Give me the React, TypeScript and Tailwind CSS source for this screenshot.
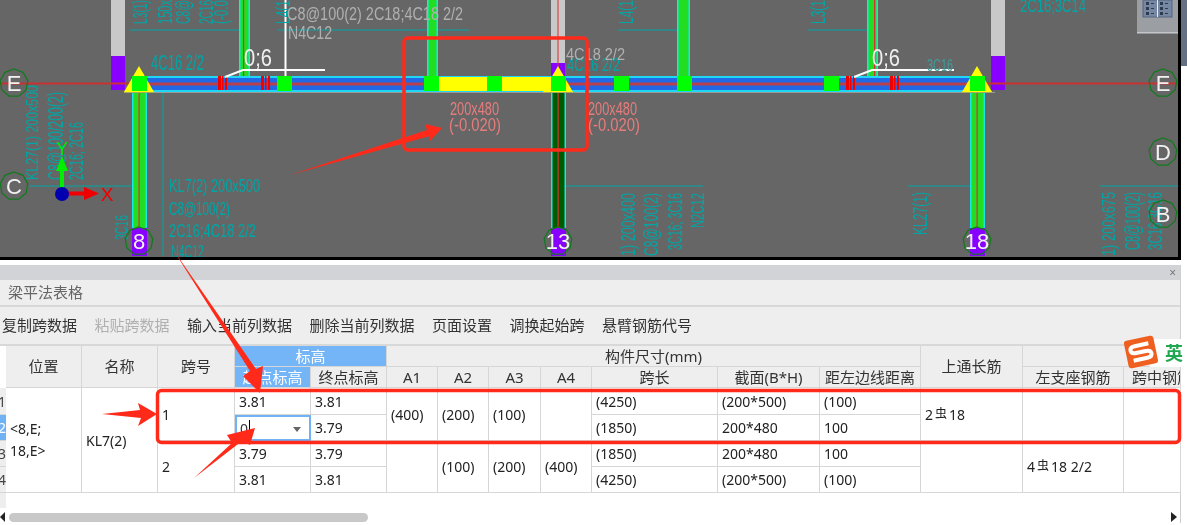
import React from "react";

const TEAL = "#00a6a6";
const PINK = "#e87c7c";
const GREY = "#b0b0b0";

// 图纸上的文字，CAD 字体偏窄，用 textLength 压缩
const T = ({ x, y, len, text, size = 18, color = TEAL }: { x: number; y: number; len: number; text: string; size?: number; color?: string }) => (
  <text x={x} y={y} fontSize={size} fill={color} textLength={len} lengthAdjust="spacingAndGlyphs" fontFamily="Liberation Sans, sans-serif">
    {text}
  </text>
);

const V = ({ x, y, len, text, size = 20, color = TEAL }: { x: number; y: number; len: number; text: string; size?: number; color?: string }) => (
  <text x={x} y={y} transform={`rotate(-90 ${x} ${y})`} fontSize={size} fill={color} textLength={len} lengthAdjust="spacingAndGlyphs" fontFamily="Liberation Sans, sans-serif">
    {text}
  </text>
);

const Axis = ({ cx, cy, label, r = 14 }: { cx: number; cy: number; label: string; r?: number }) => {
  const pts = Array.from({ length: 9 }, (_, i) => {
    const a = (i / 9) * Math.PI * 2 - Math.PI / 2;
    return `${cx + r * Math.cos(a)},${cy + r * Math.sin(a)}`;
  }).join(" ");
  return (
    <g>
      <polygon points={pts} fill="none" stroke="#127a1e" strokeWidth="1.3" />
      <text x={cx} y={cy + 8} textAnchor="middle" fontSize="22" fill="#f2f2f2" fontFamily="Liberation Sans, sans-serif">
        {label}
      </text>
    </g>
  );
};

const VBeam = ({ x, w, y, h, fill = "#22dd22", red }: { x: number; w: number; y: number; h: number; fill?: string; red?: number }) => (
  <g>
    <rect x={x} y={y} width={w} height={h} fill="#19e6e6" />
    <rect x={x + 1.5} y={y} width={w - 3} height={h} fill={fill} />
    {red !== undefined && <rect x={red} y={y} width="1.2" height={h} fill="#d83030" />}
  </g>
);

const Node = ({ x }: { x: number }) => <rect x={x} y="76" width="15" height="15" fill="#00ff00" />;

const Ticks = ({ x }: { x: number }) => (
  <g fill="#f00000">
    <rect x={x} y="76" width="3" height="14" />
    <rect x={x + 4} y="76" width="1.5" height="14" />
    <rect x={x + 7} y="76" width="2" height="14" />
  </g>
);

const Column = ({ x }: { x: number }) => (
  <g>
    <rect x={x} y="0" width="14" height="56" fill="#c9c9c9" />
    <rect x={x} y="56" width="14" height="34" fill="#8800ff" />
  </g>
);

const Tri = ({ x }: { x: number }) => (
  <g>
    <rect x={x - 15} y="91" width="30" height="2" fill="#a8a860" />
    <polygon points={`${x},66 ${x + 15},92 ${x - 15},92`} fill="#ffff00" />
    <rect x={x - 7} y="76" width="15" height="15" fill="#00ff00" />
  </g>
);

const Drawing = () => (
  <svg viewBox="0 0 1178 257" className="block w-[1178px] h-[257px]">
    <rect width="1178" height="257" fill="#666666" />

    <g stroke={TEAL} strokeWidth="1">
      <line x1="130" y1="30" x2="243" y2="30" />
      <line x1="278" y1="30" x2="470" y2="30" />
      <line x1="618" y1="30" x2="683" y2="30" />
      <line x1="808" y1="30" x2="870" y2="30" />
      <line x1="163" y1="84" x2="163" y2="256" />
      <line x1="30" y1="186" x2="140" y2="186" />
      <line x1="558" y1="186" x2="703" y2="186" />
      <line x1="908" y1="186" x2="977" y2="186" />
      <line x1="1100" y1="186" x2="1178" y2="186" />
    </g>

    <Column x={111} />
    <Column x={991} />
    <rect x="551" y="0" width="14" height="63" fill="#c9c9c9" />
    <rect x="551" y="63" width="14" height="14" fill="#8800ff" />
    <rect x="557.5" y="0" width="1" height="76" fill="#d83030" />

    <VBeam x={239} w={11} y={0} h={76} red={243} />
    <VBeam x={427} w={11} y={0} h={76} />
    <VBeam x={677} w={13} y={0} h={76} />
    <VBeam x={867} w={11} y={0} h={76} red={874} />

    <VBeam x={132} w={15} y={92} h={164} red={138.5} />
    <VBeam x={551} w={15} y={92} h={164} fill="#005a00" red={557.5} />
    <VBeam x={970} w={15} y={92} h={164} red={976.5} />
    <rect x="132" y="228" width="15" height="28" fill="#8800ff" />
    <rect x="551" y="228" width="15" height="28" fill="#8800ff" />
    <rect x="970" y="228" width="15" height="28" fill="#8800ff" />

    <rect x="0" y="82.5" width="146" height="2" fill="#c83232" />
    <rect x="985" y="82.5" width="193" height="2" fill="#c83232" />

    {/* 主梁 */}
    <rect x="125" y="92" width="870" height="1" fill="#9a9a9a" />
    <rect x="146" y="76" width="826" height="16" fill="#1fd6f5" />
    <rect x="146" y="78" width="826" height="12" fill="#2068e6" />
    <rect x="146" y="82.5" width="826" height="3" fill="#b8404e" />

    <rect x="439" y="77" width="48" height="14" fill="#ffff00" />
    <rect x="502" y="77" width="49" height="14" fill="#ffff00" />
    <Node x={277} />
    <Node x={424} />
    <Node x={487} />
    <Node x={614} />
    <Node x={677} />
    <Node x={824} />
    <Ticks x={218} />
    <Ticks x={261} />
    <Ticks x={846} />
    <Ticks x={890} />

    <Tri x={139} />
    <Tri x={558} />
    <Tri x={977} />

    {/* 白色引线 */}
    <g stroke="#ffffff" strokeWidth="2" fill="none">
      <polyline points="225,77 243,70 325,70" />
      <polyline points="854,77 872,70 954,70" />
      <line x1="285.5" y1="0" x2="285.5" y2="76" />
    </g>
    <T x={244} y={66} len={28} text="0;6" size={23} color="#f0f0f0" />
    <T x={872} y={66} len={28} text="0;6" size={23} color="#f0f0f0" />

    <T x={151} y={70} len={53} text="4C16 2/2" size={22} />
    <T x={169} y={192} len={91} text="KL7(2) 200x500" />
    <T x={169} y={215} len={61} text="C8@100(2)" />
    <T x={169} y={237} len={87} text="2C16;4C18 2/2" />
    <T x={171} y={258} len={33} text="N4C12" />
    <V x={38} y={180} len={95} text="KL27(1) 200x500" size={17} />
    <V x={63} y={180} len={88} text="C8@100/200(2)" size={22} />
    <V x={83} y={180} len={58} text="2C16; 2C16" size={20} />
    <V x={128} y={240} len={25} text="3C16" size={18} />

    <V x={147} y={24} len={24} text="L3(1)" />
    <V x={172} y={24} len={24} text="150x" />
    <V x={190} y={24} len={24} text="C8@" />
    <V x={213} y={24} len={24} text="2C16" />
    <V x={228} y={24} len={24} text="(-0.0" />
    <V x={290} y={24} len={24} text="L4(1" />
    <T x={287} y={20} len={176} text="C8@100(2) 2C18;4C18 2/2" color={GREY} />
    <T x={288} y={39} len={44} text="N4C12" color={GREY} />

    <T x={567} y={71} len={53} text="4C16 2/2" size={19} />
    <T x={566} y={60} len={59} text="4C18 2/2" size={17} color={GREY} />
    <T x={450} y={115} len={49} text="200x480" color={PINK} />
    <T x={449} y={131} len={52} text="(-0.020)" color={PINK} />
    <T x={588} y={115} len={49} text="200x480" color={PINK} />
    <T x={588} y={131} len={52} text="(-0.020)" color={PINK} />

    <V x={635} y={256} len={63} text="1) 200x400" />
    <V x={658} y={256} len={63} text="C8@100(2)" />
    <V x={682} y={250} len={57} text="3C16; 3C16" />
    <V x={704} y={228} len={35} text="N2C12" size={19} />
    <V x={633} y={24} len={24} text="L4(1" />
    <V x={825} y={24} len={24} text="L3(1" />
    <T x={1020} y={12} len={66} text="2C16;3C14" />
    <T x={927} y={71} len={26} text="3C16" size={17} color="#3f9c9c" />
    <V x={927} y={235} len={43} text="KL27(1)" />
    <V x={1115} y={256} len={64} text="1) 200x675" size={18} />
    <V x={1140} y={250} len={58} text="C8@100(2)" size={22} />
    <V x={1162} y={250} len={58} text="3C16;3C16" />

    <Axis cx={14} cy={83} label="E" />
    <Axis cx={14} cy={186} label="C" />
    <Axis cx={139} cy={241} label="8" />
    <Axis cx={558} cy={241} label="13" />
    <Axis cx={977} cy={241} label="18" />
    <Axis cx={1163} cy={83} label="E" />
    <Axis cx={1163} cy={152} label="D" />
    <Axis cx={1163} cy={214} label="B" />

    {/* 坐标轴 */}
    <rect x="60" y="168" width="4" height="20" fill="#00ee00" />
    <polygon points="62,156 68,171 56,171" fill="#00ee00" />
    <rect x="68" y="191.5" width="18" height="4" fill="#f00000" />
    <polygon points="99,193.5 84,187 84,200" fill="#f00000" />
    <circle cx="62" cy="194" r="7" fill="#0000b0" />
    <text x="62" y="155" textAnchor="middle" fontSize="18" fill="#00ee00" fontFamily="Liberation Sans, sans-serif">Y</text>
    <text x="107" y="201" textAnchor="middle" fontSize="19" fill="#f00000" fontFamily="Liberation Sans, sans-serif">X</text>

    {/* 右上角视图按钮 */}
    <rect x="1137" y="0" width="41" height="33" fill="#9b9fa3" />
    <rect x="1137" y="32" width="41" height="1.5" fill="#c4c7ca" />
    <rect x="1143" y="0" width="29" height="17" fill="#7587a2" stroke="#55657e" />
    <line x1="1157.5" y1="0" x2="1157.5" y2="17" stroke="#e8ecf2" />
    <g fill="#2f3a4c">
      <rect x="1146" y="2" width="3" height="3" />
      <rect x="1146" y="7" width="3" height="3" />
      <rect x="1146" y="12" width="3" height="3" />
      <rect x="1160" y="2" width="3" height="3" />
      <rect x="1160" y="7" width="3" height="3" />
      <rect x="1160" y="12" width="3" height="3" />
      <rect x="1151" y="3" width="3" height="1" />
      <rect x="1151" y="8" width="3" height="1" />
      <rect x="1151" y="13" width="3" height="1" />
      <rect x="1165" y="3" width="3" height="1" />
      <rect x="1165" y="8" width="3" height="1" />
      <rect x="1165" y="13" width="3" height="1" />
    </g>
  </svg>
);

const line = "border-r border-b border-[#d6d6d6]";
const head = `${line} bg-[#eeeeee] flex items-center justify-center text-[15px] text-[#333]`;
const cell = `${line} bg-white flex items-center pl-[4px] text-[14px] text-[#222]`;

const Rebar = ({ n, rest }: { n: string; rest: string }) => (
  <>
    {n}
    <span className="text-[12px] relative -top-[2px] mx-[2px]">虫</span>
    {rest}
  </>
);

const RowNo = ({ n, row, active }: { n: string; row: string; active?: boolean }) => (
  <div className={`${row} col-start-1 border-b border-[#d6d6d6] flex items-center justify-end overflow-hidden text-[14px] ${active ? "bg-[#6fb2f6] text-white" : "bg-[#eeeeee] text-[#444]"}`}>
    <span className="shrink-0">{n}</span>
  </div>
);

const BeamTable = () => (
  <div className="grid grid-cols-[6px_76px_76px_77px_76px_76px_51px_51px_52px_51px_126px_102px_101px_102px_101px_57px] grid-rows-[21px_21px_27px_26px_26px_26px_15px] w-[1181px]">
    <div className="row-start-1 row-span-2 col-start-1 bg-white" />
    <div className={`${head} row-start-1 row-span-2 col-start-2`}>位置</div>
    <div className={`${head} row-start-1 row-span-2 col-start-3`}>名称</div>
    <div className={`${head} row-start-1 row-span-2 col-start-4`}>跨号</div>
    <div className={`${head} row-start-1 col-start-5 col-span-2 !bg-[#74b5f8] !text-white`}>标高</div>
    <div className={`${head} row-start-1 col-start-7 col-span-7`}>构件尺寸(mm)</div>
    <div className={`${head} row-start-1 row-span-2 col-start-14`}>上通长筋</div>
    <div className={`${head} row-start-1 col-start-15 col-span-2`} />

    <div className={`${head} row-start-2 col-start-5 !bg-[#74b5f8] !text-white`}>起点标高</div>
    <div className={`${head} row-start-2 col-start-6`}>终点标高</div>
    <div className={`${head} row-start-2 col-start-7`}>A1</div>
    <div className={`${head} row-start-2 col-start-8`}>A2</div>
    <div className={`${head} row-start-2 col-start-9`}>A3</div>
    <div className={`${head} row-start-2 col-start-10`}>A4</div>
    <div className={`${head} row-start-2 col-start-11`}>跨长</div>
    <div className={`${head} row-start-2 col-start-12`}>截面(B*H)</div>
    <div className={`${head} row-start-2 col-start-13`}>距左边线距离</div>
    <div className={`${head} row-start-2 col-start-15`}>左支座钢筋</div>
    <div className={`${head} row-start-2 col-start-16 overflow-hidden whitespace-nowrap !justify-start pl-[8px]`}>跨中钢筋</div>

    <RowNo n="1" row="row-start-3" />
    <RowNo n="2" row="row-start-4" active />
    <RowNo n="3" row="row-start-5" />
    <RowNo n="4" row="row-start-6" />
    <div className="row-start-7 col-start-1 bg-[#eeeeee]" />

    <div className={`${cell} row-start-3 row-span-4 col-start-2`}>
      <div className="leading-[22px]">&lt;8,E;<br />18,E&gt;</div>
    </div>
    <div className={`${cell} row-start-3 row-span-4 col-start-3`}>KL7(2)</div>
    <div className={`${cell} row-start-3 row-span-2 col-start-4`}>1</div>
    <div className={`${cell} row-start-5 row-span-2 col-start-4`}>2</div>

    <div className={`${cell} row-start-3 col-start-5`}>3.81</div>
    <div className={`${cell} row-start-3 col-start-6`}>3.81</div>
    <div className="row-start-4 col-start-5 bg-white border-2 border-[#6fb2f6] flex items-center pl-[3px] text-[14px] text-[#333] relative">
      0
      <span className="h-[16px] w-px bg-black ml-[1px]" />
      <span className="absolute right-[8px] top-[10px] border-x-[4px] border-t-[5px] border-x-transparent border-t-[#666]" />
    </div>
    <div className={`${cell} row-start-4 col-start-6`}>3.79</div>
    <div className={`${cell} row-start-5 col-start-5`}>3.79</div>
    <div className={`${cell} row-start-5 col-start-6`}>3.79</div>
    <div className={`${cell} row-start-6 col-start-5`}>3.81</div>
    <div className={`${cell} row-start-6 col-start-6`}>3.81</div>

    <div className={`${cell} row-start-3 row-span-2 col-start-7`}>(400)</div>
    <div className={`${cell} row-start-5 row-span-2 col-start-7`} />
    <div className={`${cell} row-start-3 row-span-2 col-start-8`}>(200)</div>
    <div className={`${cell} row-start-5 row-span-2 col-start-8`}>(100)</div>
    <div className={`${cell} row-start-3 row-span-2 col-start-9`}>(100)</div>
    <div className={`${cell} row-start-5 row-span-2 col-start-9`}>(200)</div>
    <div className={`${cell} row-start-3 row-span-2 col-start-10`} />
    <div className={`${cell} row-start-5 row-span-2 col-start-10`}>(400)</div>

    <div className={`${cell} row-start-3 col-start-11`}>(4250)</div>
    <div className={`${cell} row-start-4 col-start-11`}>(1850)</div>
    <div className={`${cell} row-start-5 col-start-11`}>(1850)</div>
    <div className={`${cell} row-start-6 col-start-11`}>(4250)</div>
    <div className={`${cell} row-start-3 col-start-12`}>(200*500)</div>
    <div className={`${cell} row-start-4 col-start-12`}>200*480</div>
    <div className={`${cell} row-start-5 col-start-12`}>200*480</div>
    <div className={`${cell} row-start-6 col-start-12`}>(200*500)</div>
    <div className={`${cell} row-start-3 col-start-13`}>(100)</div>
    <div className={`${cell} row-start-4 col-start-13`}>100</div>
    <div className={`${cell} row-start-5 col-start-13`}>100</div>
    <div className={`${cell} row-start-6 col-start-13`}>(100)</div>

    <div className={`${cell} row-start-3 row-span-2 col-start-14`}><span><Rebar n="2" rest="18" /></span></div>
    <div className={`${cell} row-start-5 row-span-2 col-start-14`} />
    <div className={`${cell} row-start-3 row-span-2 col-start-15`} />
    <div className={`${cell} row-start-5 row-span-2 col-start-15`}><span><Rebar n="4" rest="18 2/2" /></span></div>
    <div className={`${cell} row-start-3 row-span-2 col-start-16`} />
    <div className={`${cell} row-start-5 row-span-2 col-start-16`} />
  </div>
);

const Marks = () => (
  <svg viewBox="0 0 1187 525" className="absolute inset-0 w-[1187px] h-[525px] pointer-events-none">
    <rect x="404" y="38" width="183" height="112" rx="4" fill="none" stroke="#ff2a1a" strokeWidth="3.5" />
    <rect x="157.5" y="390.5" width="1022" height="52" rx="4" fill="none" stroke="#ff2a1a" strokeWidth="3.5" />
    <g fill="#ff2a1a">
      <polygon points="290,175 427,130 425,124 442,128 430,141 430,136" />
      <polygon points="172,248 250,371 243,376 260,393 263,366 256,369" />
      <polygon points="102,414 140,410 138,403 157,414 138,426 141,418" />
      <polygon points="194,478 232,443 227,435 255,428 250,445 242,441" />
    </g>
  </svg>
);

// 搜狗输入法图标
const ImeLogo = () => (
  <svg viewBox="0 0 36 34" className="absolute left-[1123px] top-[335px] w-[36px] h-[34px]">
    <g transform="rotate(-12 18 17)">
      <rect x="3" y="3" width="30" height="28" rx="3" fill="#ef5f20" />
      <path d="M27 10 H13 Q8 10 8 13.5 Q8 17 13 17 H23 Q28 17 28 20.5 Q28 24 23 24 H9" fill="none" stroke="#ffffff" strokeWidth="4" />
    </g>
  </svg>
);

export default function App() {
  const tools = ["复制跨数据", "粘贴跨数据", "输入当前列数据", "删除当前列数据", "页面设置", "调换起始跨", "悬臂钢筋代号"];

  return (
    <div className="relative w-[1187px] h-[525px] overflow-hidden bg-white blur-[0.4px] font-['Noto_Sans','Noto_Sans_CJK_SC',sans-serif]">
      <div className="flex">
        <div className="w-[1181px] border-r-[3px] border-b-[3px] border-black">
          <Drawing />
        </div>
        <div className="w-[6px] h-[66px] bg-[#667085]" />
      </div>

      <div className="w-[1181px] mt-[5px] border-r border-[#cfcfcf]">
        <div className="h-[15px] bg-[#d1d3d7] flex items-center justify-end pr-[4px] text-[12px] leading-none text-[#777]">×</div>
        <div className="h-[27px] bg-[#eeeeee] border-b-2 border-[#d8d8d8] flex items-center pl-[8px] text-[15px] text-[#666]">梁平法表格</div>
        <div className="h-[39px] bg-[#eeeeee] border-b-2 border-[#d8d8d8] flex items-center gap-[17.5px] pl-[2px] text-[15px] text-[#333]">
          {tools.map((t) => (
            <span key={t} className={t === "粘贴跨数据" ? "text-[#b0b0b0]" : ""}>
              {t}
            </span>
          ))}
        </div>
        <BeamTable />
        <div className="h-[12px] mt-[3px] flex items-center">
          <span className="border-y-[5px] border-r-[5px] border-y-transparent border-r-[#222]" />
          <div className="w-[359px] h-[9px] ml-[4px] rounded-full bg-[#c8c8c8]" />
          <span className="ml-auto mr-[3px] border-y-[5px] border-l-[6px] border-y-transparent border-l-[#222]" />
        </div>
      </div>

      {/* 输入法状态条 */}
      <div className="absolute left-[1150px] top-[339px] w-[37px] h-[28px] bg-white flex items-center pl-[15px] text-[18px] font-bold text-[#1fa84f]">英</div>
      <ImeLogo />

      <Marks />
    </div>
  );
}
